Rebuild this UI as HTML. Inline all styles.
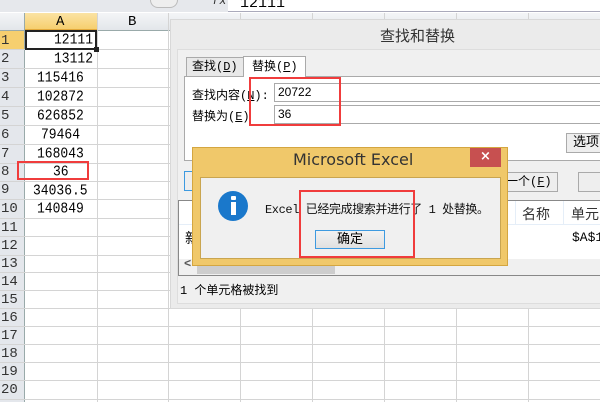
<!DOCTYPE html>
<html><head><meta charset="utf-8"><style>
*{margin:0;padding:0;box-sizing:border-box}
body{width:600px;height:402px;overflow:hidden;background:#fff;position:relative;font-family:"Liberation Mono","Noto Sans CJK SC",monospace;}
.a{position:absolute;white-space:nowrap}
.cj{font-family:"Liberation Sans","Noto Sans CJK SC",sans-serif}
.sm{font-family:"Liberation Mono","Noto Sans CJK SC",monospace}
.hl{position:absolute;left:0;width:600px;height:1px;background:#d4d4d4}
.rh{position:absolute;left:0;width:24px;color:#333;font-size:14px;line-height:18px;padding-left:1px;font-family:"Liberation Mono",monospace}
.num{position:absolute;font-size:13px;line-height:19px;font-family:"Liberation Mono",monospace;color:#000;transform:scaleY(1.15);transform-origin:0 50%}
</style></head><body>
<div class="a" style="left:0;top:0;width:600px;height:12px;background:#fff;border-bottom:1px solid #aab"></div>
<div class="a" style="left:0;top:0;width:228px;height:12px;background:#e6e8ec"></div>
<div class="a" style="left:150px;top:0;width:28px;height:8px;border-radius:0 0 10px 10px;border:1px solid #bbb;border-top:none;background:#eee"></div>
<div class="a" style="left:212px;top:-6px;font-size:12px;font-style:italic;color:#333">fx</div>
<div class="a" style="left:240px;top:-5px;font-size:15px">12111</div>
<div class="a" style="left:0;top:13px;width:600px;height:18px;background:linear-gradient(#f4f5f7,#e3e6ea);border-bottom:1px solid #9aa"></div>
<div class="a" style="left:25px;top:13px;width:72px;height:18px;background:linear-gradient(#fbe3a3,#f6cf6f);border-bottom:2px solid #e2a93b"></div>
<div class="a" style="left:56px;top:13px;font-size:14px;line-height:18px">A</div>
<div class="a" style="left:128px;top:13px;font-size:14px;line-height:18px">B</div>
<div class="a" style="left:0;top:31px;width:24px;height:371px;background:#e4e7ec"></div>
<div class="a" style="left:0;top:31px;width:24px;height:19px;background:#f6cf6f"></div>
<div class="a" style="left:24px;top:13px;width:1px;height:389px;background:#9aa"></div>
<div class="a" style="left:97px;top:13px;width:1px;height:389px;background:#d4d4d4"></div>
<div class="a" style="left:168px;top:13px;width:1px;height:389px;background:#d4d4d4"></div>
<div class="a" style="left:240px;top:13px;width:1px;height:389px;background:#d4d4d4"></div>
<div class="a" style="left:312px;top:13px;width:1px;height:389px;background:#d4d4d4"></div>
<div class="a" style="left:384px;top:13px;width:1px;height:389px;background:#d4d4d4"></div>
<div class="a" style="left:456px;top:13px;width:1px;height:389px;background:#d4d4d4"></div>
<div class="a" style="left:528px;top:13px;width:1px;height:389px;background:#d4d4d4"></div>
<div class="hl" style="top:49px"></div><div class="hl" style="top:68px"></div><div class="hl" style="top:87px"></div><div class="hl" style="top:106px"></div><div class="hl" style="top:125px"></div><div class="hl" style="top:144px"></div><div class="hl" style="top:163px"></div><div class="hl" style="top:181px"></div><div class="hl" style="top:199px"></div><div class="hl" style="top:218px"></div><div class="hl" style="top:236px"></div><div class="hl" style="top:255px"></div><div class="hl" style="top:272px"></div><div class="hl" style="top:290px"></div><div class="hl" style="top:308px"></div><div class="hl" style="top:326px"></div><div class="hl" style="top:344px"></div><div class="hl" style="top:362px"></div><div class="hl" style="top:380px"></div><div class="hl" style="top:399px"></div>
<div class="rh" style="top:32px">1</div><div class="rh" style="top:50px">2</div><div class="rh" style="top:69px">3</div><div class="rh" style="top:88px">4</div><div class="rh" style="top:107px">5</div><div class="rh" style="top:126px">6</div><div class="rh" style="top:145px">7</div><div class="rh" style="top:163px">8</div><div class="rh" style="top:181px">9</div><div class="rh" style="top:200px">10</div><div class="rh" style="top:219px">11</div><div class="rh" style="top:237px">12</div><div class="rh" style="top:255px">13</div><div class="rh" style="top:273px">14</div><div class="rh" style="top:291px">15</div><div class="rh" style="top:309px">16</div><div class="rh" style="top:327px">17</div><div class="rh" style="top:345px">18</div><div class="rh" style="top:363px">19</div><div class="rh" style="top:381px">20</div>
<div class="a" style="left:25px;top:30px;width:72px;height:20px;border:2px solid #222"></div>
<div class="a" style="left:94px;top:47px;width:5px;height:5px;background:#222"></div>
<div class="num" style="left:54px;top:30px">12111</div>
<div class="num" style="left:54px;top:49px">13112</div>
<div class="num" style="left:37px;top:68px">115416</div>
<div class="num" style="left:37px;top:87px">102872</div>
<div class="num" style="left:37px;top:106px">626852</div>
<div class="num" style="left:41px;top:125px">79464</div>
<div class="num" style="left:37px;top:144px">168043</div>
<div class="num" style="left:53px;top:162px">36</div>
<div class="num" style="left:33px;top:181px">34036.5</div>
<div class="num" style="left:37px;top:199px">140849</div>
<div class="a" style="left:17px;top:161px;width:72px;height:19px;border:2px solid #f03c3c"></div>
<div class="a" style="left:170px;top:19px;width:440px;height:290px;background:#ebebeb;border:1px solid #d8d8d8"></div>
<div class="a cj" style="left:380px;top:25px;font-size:15px;color:#333">查找和替换</div>
<div class="a" style="left:177px;top:49px;width:430px;height:255px;background:#f0f0f0;border:1px solid #ddd"></div>
<div class="a sm" style="left:186px;top:57px;width:58px;height:20px;background:#e8e8e8;border:1px solid #aaa;font-size:12px;line-height:19px;padding-left:5px">查找(<u>D</u>)</div>
<div class="a sm" style="left:243px;top:56px;width:63px;height:22px;background:#fff;border:1px solid #aaa;border-bottom:none;font-size:12px;line-height:20px;padding-left:8px">替换(<u>P</u>)</div>
<div class="a" style="left:184px;top:76px;width:420px;height:85px;background:#fff;border:1px solid #aaa"></div>
<div class="a" style="left:244px;top:76px;width:61px;height:2px;background:#fff"></div>
<div class="a sm" style="left:192px;top:86px;font-size:12px">查找内容(<u>N</u>):</div>
<div class="a sm" style="left:192px;top:107px;font-size:12px">替换为(<u>E</u>)</div>
<div class="a" style="left:274px;top:83px;width:330px;height:19px;border:1px solid #aaa;background:#fff;font-family:'Liberation Sans',sans-serif;font-size:12px;line-height:17px;padding-left:3px">20722</div>
<div class="a" style="left:274px;top:105px;width:330px;height:19px;border:1px solid #aaa;background:#fff;font-family:'Liberation Sans',sans-serif;font-size:12px;line-height:17px;padding-left:3px">36</div>
<div class="a" style="left:249px;top:77px;width:92px;height:49px;border:2px solid #f03c3c"></div>
<div class="a sm" style="left:566px;top:133px;width:40px;height:20px;border:1px solid #aaa;background:#eee;font-size:13px;line-height:18px;padding-left:6px">选项</div>
<div class="a" style="left:184px;top:171px;width:20px;height:20px;border:1px solid #3d9ae0;background:#eee"></div>
<div class="a sm" style="left:500px;top:172px;width:58px;height:20px;border:1px solid #aaa;background:#eee;font-size:12px;line-height:18px;padding-left:5px">一个(<u>F</u>)</div>
<div class="a" style="left:578px;top:172px;width:30px;height:20px;border:1px solid #aaa;background:#eee"></div>
<div class="a" style="left:178px;top:200px;width:430px;height:76px;background:#fff;border:1px solid #888"></div>
<div class="a" style="left:179px;top:201px;width:430px;height:24px;border-bottom:1px solid #e5eef8"></div>
<div class="a" style="left:515px;top:201px;width:1px;height:24px;background:#e5eef8"></div>
<div class="a" style="left:563px;top:201px;width:1px;height:24px;background:#e5eef8"></div>
<div class="a cj" style="left:522px;top:204px;font-size:14px;color:#333">名称</div>
<div class="a cj" style="left:571px;top:204px;font-size:14px;color:#333">单元</div>
<div class="a" style="left:572px;top:230px;font-size:13px">$A$1</div>
<div class="a cj" style="left:185px;top:228px;font-size:14px">新</div>
<div class="a" style="left:179px;top:259px;width:430px;height:16px;background:#f0f0f0"></div>
<div class="a" style="left:197px;top:262px;width:138px;height:12px;background:#cdcdcd"></div>
<div class="a" style="left:184px;top:257px;font-size:12px;font-weight:bold;color:#555">&lt;</div>
<div class="a sm" style="left:180px;top:281px;font-size:12px">1 个单元格被找到</div>
<div class="a" style="left:192px;top:147px;width:316px;height:119px;background:#f0c86a;border:1px solid #d4a640"></div>
<div class="a" style="left:293px;top:150px;font-size:16px;color:#333;font-family:'DejaVu Sans',sans-serif">Microsoft Excel</div>
<div class="a" style="left:470px;top:148px;width:31px;height:19px;background:#c75050;color:#fff;font-size:13px;text-align:center;line-height:18px;font-family:'DejaVu Sans',sans-serif;font-weight:bold">×</div>
<div class="a" style="left:200px;top:177px;width:301px;height:82px;background:#f0f0f0;border:1px solid #c9a550"></div>
<div class="a" style="left:218px;top:191px;width:30px;height:30px;border-radius:50%;background:#1a78cb"></div>
<div class="a" style="left:231px;top:196px;width:5px;height:4px;background:#fff;border-radius:1px"></div>
<div class="a" style="left:231px;top:202px;width:5px;height:13px;background:#fff"></div>
<div class="a sm" style="left:265px;top:200px;font-size:12px;color:#111;letter-spacing:-0.4px">Excel 已经完成搜索并进行了 1 处替换。</div>
<div class="a sm" style="left:315px;top:230px;width:70px;height:19px;border:1px solid #3d9ae0;background:linear-gradient(#f2f2f2,#e0e0e0);font-size:13px;text-align:center;line-height:17px">确定</div>
<div class="a" style="left:299px;top:190px;width:116px;height:68px;border:2px solid #f03c3c"></div>
</body></html>
